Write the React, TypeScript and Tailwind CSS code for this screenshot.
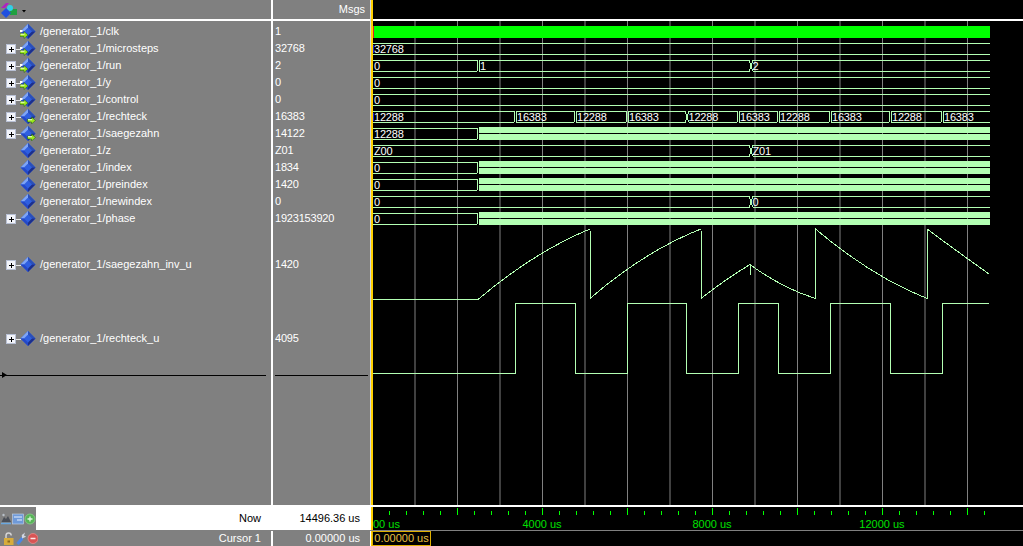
const ROWS_FONT = "font-['Liberation_Sans',sans-serif]";

type Row = {
  name: string;
  value: string;
  expand?: boolean;
  arrow?: 'left' | 'right';
  tall?: boolean;
};

const rows: Row[] = [
  { name: '/generator_1/clk', value: '1', arrow: 'left' },
  { name: '/generator_1/microsteps', value: '32768', expand: true, arrow: 'left' },
  { name: '/generator_1/run', value: '2', expand: true, arrow: 'left' },
  { name: '/generator_1/y', value: '0', expand: true, arrow: 'left' },
  { name: '/generator_1/control', value: '0', expand: true, arrow: 'left' },
  { name: '/generator_1/rechteck', value: '16383', expand: true, arrow: 'right' },
  { name: '/generator_1/saegezahn', value: '14122', expand: true, arrow: 'right' },
  { name: '/generator_1/z', value: 'Z01' },
  { name: '/generator_1/index', value: '1834' },
  { name: '/generator_1/preindex', value: '1420' },
  { name: '/generator_1/newindex', value: '0' },
  { name: '/generator_1/phase', value: '1923153920', expand: true },
  { name: '/generator_1/saegezahn_inv_u', value: '1420', expand: true, tall: true },
  { name: '/generator_1/rechteck_u', value: '4095', expand: true, tall: true },
];

const WAVE = '#b3ffb3';
const END = 989.5;
const grid = Array.from({ length: 15 }, (_, i) => 372.5 + 42.5 * i);

// [from x, label] per bus segment, row index counts from 0 at clk
const buses: { row: number; segs: [number, string][]; solidFrom?: number; marker?: boolean }[] = [
  { row: 1, segs: [[373, '32768']], marker: true },
  { row: 2, segs: [[373, '0'], [478, '1'], [750.5, '2']] },
  { row: 3, segs: [[373, '0']] },
  { row: 4, segs: [[373, '0']] },
  {
    row: 5,
    marker: true,
    segs: [
      [373, '12288'], [515, '16383'], [575, '12288'], [627, '16383'], [686.5, '12288'],
      [738, '16383'], [778, '12288'], [830, '16383'], [890, '12288'], [942, '16383'],
    ],
  },
  { row: 6, segs: [[373, '12288']], solidFrom: 478 },
  { row: 7, segs: [[373, 'Z00'], [750.5, 'Z01']] },
  { row: 8, segs: [[373, '0']], solidFrom: 478 },
  { row: 9, segs: [[373, '0']], solidFrom: 478 },
  { row: 10, segs: [[373, '0'], [750.5, '0']] },
  { row: 11, segs: [[373, '0']], solidFrom: 478 },
];

const sawPath =
  'M373 299.5 H478 Q534 252 590 229 L590.5 298 Q646 250.5 701 229 L701.5 298 Q726 279 750 264.5 V275 V264.5 Q782 288 815.5 298.5 V229 Q871 276 927 298.5 V229 Q958 252 989 274';
const squarePoints =
  '373,373.5 515.5,373.5 515.5,303.5 575.5,303.5 575.5,373.5 627.5,373.5 627.5,303.5 686.5,303.5 686.5,373.5 738.5,373.5 738.5,303.5 778.5,303.5 778.5,373.5 830.5,373.5 830.5,303.5 890.5,303.5 890.5,373.5 942.5,373.5 942.5,303.5 989,303.5';

const minorTicks = Array.from({ length: 37 }, (_, i) => 372.5 + 17 * i);

function SignalIcon({ arrow }: { arrow?: 'left' | 'right' }) {
  return (
    <svg width="16" height="15" viewBox="0 0 16 15" className="shrink-0">
      <polygon points="8,0 15.5,7.5 8,15 0.5,7.5" fill="#2f5fe0" />
      <polygon points="8,0 0.5,7.5 4,7.5 8,3.5" fill="#7fa5f5" />
      <polygon points="8,0 15.5,7.5 12,7.5 8,3.5" fill="#2a4fb8" />
      <polygon points="15.5,7.5 8,15 8,11.5 12,7.5" fill="#1c2f8c" />
      <polygon points="0.5,7.5 8,15 8,11.5 4,7.5" fill="#2448c8" />
      {arrow === 'left' && (
        <g>
          <rect x="0" y="6" width="2.5" height="2" fill="#ffffff" />
          <polygon points="0,9.5 4,9.5 4,7.5 8,11 4,14.5 4,12.5 0,12.5" fill="#9ce81c" stroke="#1c5a10" strokeWidth="0.5" />
          <path d="M0.5 10.2H4.5" stroke="#f4ffe0" strokeWidth="1" />
        </g>
      )}
      {arrow === 'right' && (
        <g>
          <polygon points="7.5,10 11.5,10 11.5,8 15.5,11.5 11.5,15 11.5,13 7.5,13" fill="#9ce81c" stroke="#1c5a10" strokeWidth="0.5" />
          <path d="M8 10.7H12" stroke="#f4ffe0" strokeWidth="1" />
        </g>
      )}
    </svg>
  );
}

function PlusBox() {
  return (
    <svg width="15" height="10" viewBox="0 0 15 10" className="shrink-0">
      <rect x="0.5" y="0.5" width="9" height="9" fill="#f2f4fa" stroke="#b8c0d4" />
      <path d="M2.5 5h5M5 2.5v5" stroke="#000000" strokeWidth="1" shapeRendering="crispEdges" />
      <path d="M10 5h5" stroke="#e8e8e8" strokeWidth="1" shapeRendering="crispEdges" />
    </svg>
  );
}

function BusRow({ row, segs, solidFrom, marker }: { row: number; segs: [number, string][]; solidFrom?: number; marker?: boolean }) {
  const top = 43 + 17 * (row - 1);
  const bottom = top + 11.5;
  const mid = top + 6;
  const last = solidFrom ?? END;
  return (
    <g>
      {segs.map(([from, label], i) => {
        const isLast = i + 1 === segs.length;
        const to = isLast ? last : segs[i + 1][0];
        const start = i === 0 ? from : from + 2;
        const stop = isLast && solidFrom === undefined ? to : to - 1;
        const leftCap = i > 0 ? `M${from + 2} ${top} L${from + 1} ${mid} L${from + 2} ${bottom} ` : '';
        const rightCap = stop !== to ? `M${stop} ${top} L${to} ${mid} L${stop} ${bottom} ` : '';
        return (
          <g key={from}>
            <path
              d={`M${start} ${top} H${stop} M${start} ${bottom} H${stop} ${leftCap}${rightCap}`}
              fill="none"
              stroke={WAVE}
              strokeWidth="1"
              shapeRendering="crispEdges"
            />
            <text
              x={i === 0 ? from + 1 : from + 2}
              y={mid + 4}
              fill="#ffffff"
              fontSize="11"
              letterSpacing="-0.2"
              fontFamily="Liberation Sans, sans-serif"
            >
              {label}
            </text>
          </g>
        );
      })}
      {solidFrom !== undefined && (
        <g fill={WAVE}>
          <rect x={solidFrom + 1} y={top - 1} width={990 - solidFrom - 1} height="6" />
          <rect x={solidFrom + 1} y={top + 6} width={990 - solidFrom - 1} height="6" />
        </g>
      )}
      {marker && <rect x="373" y={top + 2} width="1" height="8" fill="#2020d0" />}
    </g>
  );
}

function Waves() {
  return (
    <svg width="650" height="484" viewBox="373 21 650 484" className="block bg-black">
      {grid.map((x) => (
        <line key={x} x1={x} x2={x} y1="21" y2="505" stroke="#808080" strokeWidth="1" />
      ))}
      <rect x="373" y="26" width="617" height="12" fill="#00ff00" />
      <rect x="373" y="26" width="1" height="12" fill="#e02020" />
      {buses.map((b) => (
        <BusRow key={b.row} row={b.row} segs={b.segs} solidFrom={b.solidFrom} marker={b.marker} />
      ))}
      <path d={sawPath} fill="none" stroke={WAVE} strokeWidth="1" shapeRendering="crispEdges" />
      <polyline points={squarePoints} fill="none" stroke={WAVE} strokeWidth="1" shapeRendering="crispEdges" />
    </svg>
  );
}

function Timeline() {
  return (
    <svg width="650" height="23" viewBox="373 507 650 23" className="block bg-black">
      {minorTicks.map((x, i) => (
        <line key={x} x1={x} x2={x} y1={i % 5 === 0 ? 508 : 511} y2="515" stroke="#00ff00" strokeWidth="1" />
      ))}
      <g fill="#00e000" fontSize="11" fontFamily="Liberation Sans, sans-serif">
        <text x="373" y="528">00 us</text>
        <text x="542" y="528" textAnchor="middle">4000 us</text>
        <text x="712" y="528" textAnchor="middle">8000 us</text>
        <text x="882" y="528" textAnchor="middle">12000 us</text>
      </g>
    </svg>
  );
}

function StatusIcons() {
  return (
    <svg width="36" height="16" viewBox="0 0 36 16" className="shrink-0">
      <path d="M1.5 11 L4 6 L6 8 L8 5 L11 11 Z" fill="#4a4f58" />
      <circle cx="3.5" cy="4" r="1.2" fill="#b8c0c8" />
      <path d="M1 12.5h10" stroke="#6aa8e0" strokeWidth="1.5" />
      <rect x="12.5" y="3" width="11" height="10" fill="#6f9ad8" stroke="#c8d6ea" strokeWidth="0.6" />
      <path d="M14 6h8M17 9h5" stroke="#e8f0ff" />
      <circle cx="30" cy="8" r="5" fill="#58b458" stroke="#86cf86" strokeWidth="0.8" />
      <path d="M27.5 8h5M30 5.5v5" stroke="#e0f5e0" strokeWidth="1.3" />
    </svg>
  );
}

function CursorIcons() {
  return (
    <svg width="38" height="15" viewBox="0 0 38 15" className="shrink-0">
      <rect x="4" y="7" width="9.5" height="7" fill="#d8ac3c" />
      <path d="M6 7V4.5a2.6 2.6 0 0 1 5.2 0" fill="none" stroke="#d4d4d4" strokeWidth="1.5" />
      <path d="M7.5 9.5h2.5v2h-2.5z" fill="#8a6a20" />
      <path d="M17.5 13 L22.5 7" stroke="#4a86e4" strokeWidth="3" />
      <path d="M22 7.5 L21.8 4 L25 1.5 L24 4.5 L26 5.5 L25.5 6 Z" fill="#d0d6e2" />
      <circle cx="33" cy="7.5" r="5" fill="#d85454" stroke="#e88a8a" strokeWidth="0.8" />
      <path d="M30.5 7.5h5" stroke="#ffe8e8" strokeWidth="1.5" />
    </svg>
  );
}

export default function App() {
  return (
    <div className={`flex h-[546px] w-[1023px] flex-col overflow-hidden bg-[#808080] text-[11px] text-white ${ROWS_FONT}`}>
      <div className="flex h-[505px]">
        {/* names */}
        <div className="flex w-[271px] flex-col">
          <div className="flex h-[19px] items-center pl-px">
            <svg width="26" height="18" viewBox="0 0 26 18">
              <polygon points="0,7 5,2 8,2 4,7" fill="#b020c0" />
              <rect x="9" y="8" width="7" height="6" fill="#20a040" />
              <circle cx="9" cy="7" r="3" fill="#30d0e8" />
              <polygon points="5,7 10,12 5,17 0,12" fill="#2050e0" />
              <polygon points="21,9 25,9 23,11.5" fill="#000000" />
            </svg>
          </div>
          <div className="h-[2px] bg-white" />
          <div className="h-[2px]" />
          {rows.map((r) => (
            <div
              key={r.name}
              className={`flex items-center pl-[6px] ${r.tall ? 'h-[74px] pt-[1px]' : 'h-[17px]'}`}
            >
              <div className="w-[14px] shrink-0">{r.expand && <PlusBox />}</div>
              <SignalIcon arrow={r.arrow} />
              <span className="ml-[4px] whitespace-nowrap">{r.name}</span>
            </div>
          ))}
          <div className="relative mr-[5px] h-px bg-black">
            <span className="absolute left-[2px] top-[-3px] h-0 w-0 border-y-[3px] border-l-[5px] border-y-transparent border-l-black" />
          </div>
        </div>
        <div className="w-[2px] bg-white" />
        {/* values */}
        <div className="flex w-[97px] flex-col">
          <div className="flex h-[19px] items-center justify-end pr-[5px]">Msgs</div>
          <div className="h-[2px] bg-white" />
          <div className="h-[2px]" />
          {rows.map((r) => (
            <div
              key={r.name}
              className={`flex items-center pl-[2px] tracking-[-0.2px] ${r.tall ? 'h-[74px] pt-[1px]' : 'h-[17px]'}`}
            >
              {r.value}
            </div>
          ))}
          <div className="mx-[2px] h-px bg-black" />
        </div>
        <div className="w-px bg-[#d8d8d8]" />
        <div className="w-[2px] bg-[#ffd000]" />
        {/* wave pane */}
        <div className="flex w-[650px] flex-col">
          <div className="h-[19px] bg-black" />
          <div className="h-[2px] bg-white" />
          <Waves />
        </div>
      </div>

      {/* footer */}
      <div className="h-[2px] bg-white" />
      <div className="flex h-[23px]">
        <div className="flex w-[271px]">
          <div className="flex w-[36px] items-center bg-[#808080]">
            <StatusIcons />
          </div>
          <div className="flex flex-1 items-center justify-end bg-white pr-[10px] text-black">Now</div>
        </div>
        <div className="w-[2px] bg-white" />
        <div className="flex w-[97px] items-center justify-end bg-white pr-[10px] text-black">14496.36 us</div>
        <div className="w-px bg-white" />
        <div className="w-[2px] bg-[#ffd000]" />
        <Timeline />
      </div>
      <div className="flex h-[16px] border-t border-[#808080]">
        <div className="flex w-[271px] items-center justify-between pr-[10px]">
          <CursorIcons />
          <span>Cursor 1</span>
        </div>
        <div className="w-[2px] bg-white" />
        <div className="flex w-[97px] items-center justify-end pr-[10px]">0.00000 us</div>
        <div className="w-px bg-white" />
        <div className="w-[2px] bg-[#ffd000]" />
        <div className="flex w-[650px] bg-black">
          <div className="ml-[-1px] flex w-[59px] items-center justify-center border border-[#e0b000] text-[#e8c040]">
            0.00000 us
          </div>
        </div>
      </div>
    </div>
  );
}
